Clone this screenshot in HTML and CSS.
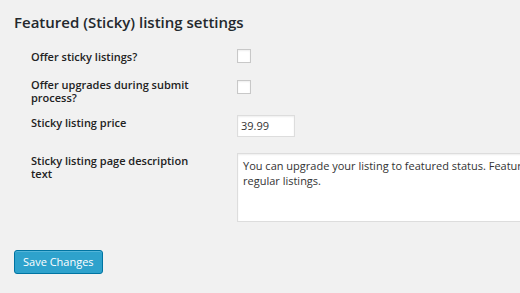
FILE: index.html
```html
<!DOCTYPE html>
<html lang="en">

<head>
    <meta charset="UTF-8">
    <title>Featured listing settings</title>
    <link rel="stylesheet" href="styles.css">
</head>

<body>
    <div class="wrap">
        <h2 class="section-title">Featured (Sticky) listing settings</h2>

        <div class="form-table">
            <div class="row row-1">
                <label class="row-label" for="offer-sticky">Offer sticky listings?</label>
                <div class="row-field"><span class="checkbox" id="offer-sticky"></span></div>
            </div>
            <div class="row row-2">
                <label class="row-label" for="offer-upgrades">Offer upgrades during submit process?</label>
                <div class="row-field"><span class="checkbox check-low" id="offer-upgrades"></span></div>
            </div>
            <div class="row row-3">
                <label class="row-label" for="price">Sticky listing price</label>
                <div class="row-field"><div class="text-input" id="price">39.99</div></div>
            </div>
            <div class="row row-4">
                <label class="row-label" for="desc">Sticky listing page description text</label>
                <div class="row-field"><div class="textarea" id="desc">You can upgrade your listing to featured status. Featured listings will always appear on top of regular listings.</div></div>
            </div>
        </div>

        <div class="submit">
            <button class="button-primary">Save Changes</button>
        </div>
    </div>
</body>

</html>
```

FILE: styles.css
```css
body {
    margin: 0;
    background-color: #f1f1f1;
    font-family: "Open Sans", "Liberation Sans", sans-serif;
    color: #222;
    overflow: hidden;
}

.wrap {
    padding: 0 0 0 14px;
}

.section-title {
    margin: 0;
    padding-top: 12px;
    font-size: 15px;
    font-weight: 600;
    line-height: 20px;
    color: #23282d;
}

.form-table {
    margin-top: 17px;
    margin-left: 17px;
}

.row {
    display: grid;
    grid-template-columns: 206px 1fr;
    align-items: start;
}

.row-label {
    font-size: 11px;
    font-weight: 600;
    line-height: 13px;
    width: 170px;
    margin-top: 1px;
}

.row-1 {
    height: 28px;
}

.row-2 {
    height: 38px;
}

.row-3 {
    height: 38px;
}

.checkbox {
    display: block;
    width: 12px;
    height: 12px;
    border: 1px solid #c8c8c8;
    background: #fff;
    box-shadow: inset 0 1px 2px rgba(0, 0, 0, 0.07);
}

.check-low {
    margin-top: 3px;
}

.text-input {
    width: 50px;
    height: 20px;
    line-height: 20px;
    padding: 0 3px;
    border: 1px solid #dddddd;
    background: #fff;
    font-size: 11px;
    color: #333;
    box-shadow: inset 0 1px 2px rgba(0, 0, 0, 0.07);
}

.row-field {
    min-width: 0;
}

.textarea {
    width: 500px;
    height: 59px;
    padding: 4px 5px;
    border: 1px solid #dddddd;
    background: #fff;
    font-size: 11px;
    line-height: 15px;
    color: #333;
    box-shadow: inset 0 1px 2px rgba(0, 0, 0, 0.07);
}

.submit {
    margin-top: 28px;
}

.button-primary {
    display: block;
    height: 24px;
    padding: 0 8px;
    background-color: #2ea2cc;
    border: 1px solid #0074a2;
    border-radius: 3px;
    box-shadow: inset 0 1px 0 rgba(120, 200, 230, 0.5);
    color: #fff;
    font-family: "Open Sans", "Liberation Sans", sans-serif;
    font-size: 11px;
    line-height: 22px;
}
```
